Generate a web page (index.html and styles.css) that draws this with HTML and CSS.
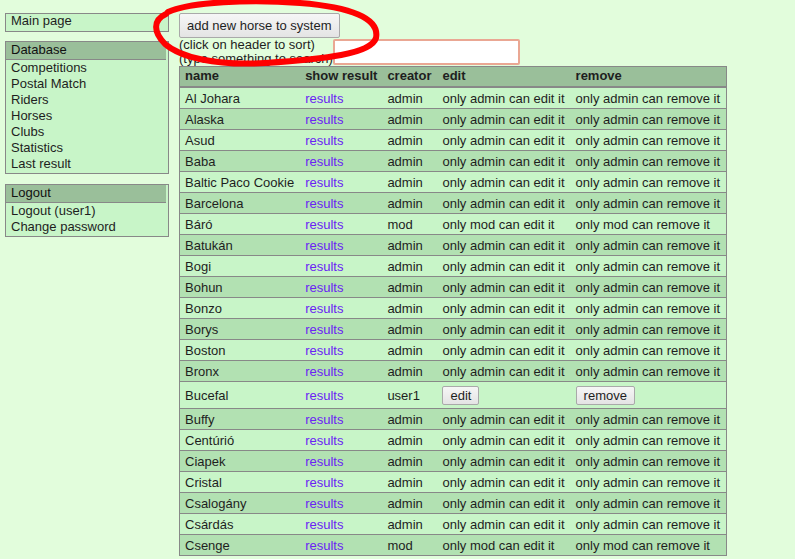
FILE: index.html
```html
<!DOCTYPE html>
<html>
<head>
<meta charset="utf-8">
<link rel="stylesheet" href="styles.css">
</head>
<body>
<div class="page">
  <aside class="sidebar">
    <div class="box single"><a class="item" href="#">Main page</a></div>
    <div class="box">
      <div class="box-head">Database</div>
      <a class="item" href="#">Competitions</a>
      <a class="item" href="#">Postal Match</a>
      <a class="item" href="#">Riders</a>
      <a class="item" href="#">Horses</a>
      <a class="item" href="#">Clubs</a>
      <a class="item" href="#">Statistics</a>
      <a class="item" href="#">Last result</a>
    </div>
    <div class="box last">
      <div class="box-head">Logout</div>
      <a class="item" href="#">Logout (user1)</a>
      <a class="item" href="#">Change password</a>
    </div>
  </aside>
  <main class="main">
    <button class="btn add-btn">add new horse to system</button>
    <div class="search-row">
      <div class="hints">(click on header to sort)<br>(type something to search)</div>
      <input class="search" type="text">
    </div>
    <table class="grid">
      <thead>
        <tr><th>name</th><th class="tight">show result</th><th>creator</th><th>edit</th><th>remove</th></tr>
      </thead>
      <tbody>
        <tr><td>Al Johara</td><td><a href="#">results</a></td><td>admin</td><td>only admin can edit it</td><td>only admin can remove it</td></tr>
        <tr><td>Alaska</td><td><a href="#">results</a></td><td>admin</td><td>only admin can edit it</td><td>only admin can remove it</td></tr>
        <tr><td>Asud</td><td><a href="#">results</a></td><td>admin</td><td>only admin can edit it</td><td>only admin can remove it</td></tr>
        <tr><td>Baba</td><td><a href="#">results</a></td><td>admin</td><td>only admin can edit it</td><td>only admin can remove it</td></tr>
        <tr><td>Baltic Paco Cookie</td><td><a href="#">results</a></td><td>admin</td><td>only admin can edit it</td><td>only admin can remove it</td></tr>
        <tr><td>Barcelona</td><td><a href="#">results</a></td><td>admin</td><td>only admin can edit it</td><td>only admin can remove it</td></tr>
        <tr><td>Báró</td><td><a href="#">results</a></td><td>mod</td><td>only mod can edit it</td><td>only mod can remove it</td></tr>
        <tr><td>Batukán</td><td><a href="#">results</a></td><td>admin</td><td>only admin can edit it</td><td>only admin can remove it</td></tr>
        <tr><td>Bogi</td><td><a href="#">results</a></td><td>admin</td><td>only admin can edit it</td><td>only admin can remove it</td></tr>
        <tr><td>Bohun</td><td><a href="#">results</a></td><td>admin</td><td>only admin can edit it</td><td>only admin can remove it</td></tr>
        <tr><td>Bonzo</td><td><a href="#">results</a></td><td>admin</td><td>only admin can edit it</td><td>only admin can remove it</td></tr>
        <tr><td>Borys</td><td><a href="#">results</a></td><td>admin</td><td>only admin can edit it</td><td>only admin can remove it</td></tr>
        <tr><td>Boston</td><td><a href="#">results</a></td><td>admin</td><td>only admin can edit it</td><td>only admin can remove it</td></tr>
        <tr><td>Bronx</td><td><a href="#">results</a></td><td>admin</td><td>only admin can edit it</td><td>only admin can remove it</td></tr>
        <tr class="own"><td>Bucefal</td><td><a href="#">results</a></td><td>user1</td><td><button class="btn small">edit</button></td><td><button class="btn small">remove</button></td></tr>
        <tr><td>Buffy</td><td><a href="#">results</a></td><td>admin</td><td>only admin can edit it</td><td>only admin can remove it</td></tr>
        <tr><td>Centúrió</td><td><a href="#">results</a></td><td>admin</td><td>only admin can edit it</td><td>only admin can remove it</td></tr>
        <tr><td>Ciapek</td><td><a href="#">results</a></td><td>admin</td><td>only admin can edit it</td><td>only admin can remove it</td></tr>
        <tr><td>Cristal</td><td><a href="#">results</a></td><td>admin</td><td>only admin can edit it</td><td>only admin can remove it</td></tr>
        <tr><td>Csalogány</td><td><a href="#">results</a></td><td>admin</td><td>only admin can edit it</td><td>only admin can remove it</td></tr>
        <tr><td>Csárdás</td><td><a href="#">results</a></td><td>admin</td><td>only admin can edit it</td><td>only admin can remove it</td></tr>
        <tr><td>Csenge</td><td><a href="#">results</a></td><td>mod</td><td>only mod can edit it</td><td>only mod can remove it</td></tr>
      </tbody>
    </table>
  </main>
</div>
<svg class="annotation" width="795" height="100" viewBox="0 0 795 100">
  <path d="M168,12 C190,2 250,-1 300,3 C350,7 380,18 376,38 C371,54 325,59 265,63 C215,66 180,57 165,44 C153,32 153,20 166,14" fill="none" stroke="#ff0000" stroke-width="6" stroke-linecap="round"/>
</svg>
</body>
</html>
```
FILE: styles.css
```css
html, body {
  margin: 0;
  padding: 0;
}
body {
  background: #e2fddc;
  font-family: "Liberation Sans", Arial, sans-serif;
  font-size: 13px;
  color: #1e1e1e;
  position: relative;
  overflow: hidden;
  height: 559px;
}
.page {
  display: flex;
  align-items: flex-start;
  padding: 13px 0 0 5px;
  gap: 10px;
}
.sidebar {
  width: 164px;
  display: flex;
  flex-direction: column;
  gap: 9px;
  flex-shrink: 0;
}
.box {
  background: #c8f5c8;
  border: 1px solid #888;
  display: flex;
  flex-direction: column;
  padding-bottom: 1px;
}
.box.last {
  margin-top: 1px;
}
.box.single {
  padding: 0;
  height: 17px;
}
.box.single .item {
  line-height: 14px;
}
.box-head {
  background: #9abf9a;
  border-bottom: 1px solid #888;
  padding: 0 5px;
  height: 17px;
  line-height: 15px;
  color: #111;
  margin: 0 2px 0 0;
}
.item {
  display: block;
  padding: 0 5px;
  line-height: 16px;
  color: #1e1e1e;
  text-decoration: none;
}
.main {
  display: flex;
  flex-direction: column;
  align-items: flex-start;
}
.btn {
  font-family: "Liberation Sans", Arial, sans-serif;
  font-size: 13px;
  color: #1e1e1e;
  background: linear-gradient(#f6f6f6, #e4e4e4);
  border: 1px solid #a9a9a9;
  border-radius: 2px;
  padding: 0 7px;
  margin: 0;
  white-space: nowrap;
}
.add-btn {
  height: 25px;
}
.search-row {
  display: flex;
  align-items: flex-end;
}
.hints {
  line-height: 14px;
  white-space: nowrap;
}
.search {
  appearance: none;
  -webkit-appearance: none;
  width: 187px;
  height: 26px;
  box-sizing: border-box;
  border: 2px solid #eaa793;
  border-radius: 2px;
  background: #fff;
  margin: 0 0 1px;
  padding: 0;
}
.grid {
  border-collapse: collapse;
  border: 1px solid #888;
  margin-top: 0;
}
.grid th {
  background: #9abf9a;
  text-align: left;
  font-weight: bold;
  padding: 1px 6px 3px 5px;
  line-height: 15px;
  border-bottom: 2px solid #888;
  white-space: nowrap;
}
.grid th.tight {
  padding-right: 5px;
}
.grid td {
  padding: 3px 6px 2px 5px;
  line-height: 15px;
  border-top: 1px solid #888;
  white-space: nowrap;
}
.grid tbody tr:nth-child(odd) {
  background: #c8f5c8;
}
.grid tbody tr:nth-child(even) {
  background: #b2e1b2;
}
.grid a {
  color: #6a24f4;
  text-decoration: none;
}
.grid tr.own td {
  padding-top: 4px;
  padding-bottom: 3px;
}
.btn.small {
  height: 19px;
  line-height: 16px;
  padding: 0 7px;
  vertical-align: middle;
}
.annotation {
  position: absolute;
  left: 0;
  top: 0;
  pointer-events: none;
}
```
